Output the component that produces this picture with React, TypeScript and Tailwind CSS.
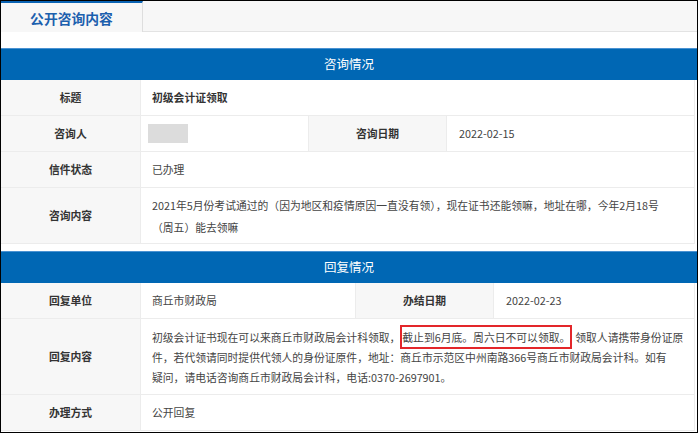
export default function App() {
  // 通用样式
  const label = "flex items-center justify-center bg-[#f7f7f7] font-bold text-[#333]";
  const row = "flex border-b border-[#ececec]";

  return (
    <div className="w-[698px] h-[433px] border border-black bg-white overflow-hidden font-['Noto_Sans_CJK_SC',sans-serif] text-[10.8px] text-[#444]">
      {/* 标签栏 */}
      <div className="flex h-[31px] bg-[#f7f7f7]">
        <div className="w-[142px] border-t-2 border-r border-[#0a63b3] border-r-[#dedede] flex items-center justify-center pt-[1px] text-[13.8px] font-bold text-[#1c60ae]">
          公开咨询内容
        </div>
        <div className="flex-1 border-b border-[#e3e3e3]" />
      </div>

      {/* 咨询情况 */}
      <div className="mt-[16px] h-[32px] bg-[#0067b4] border-t border-[#4a92d2] flex items-center justify-center text-white text-[12.5px]">
        咨询情况
      </div>
      <div className="mr-[2px] border-r border-[#ececec]">
        <div className={`${row} h-[36px]`}>
          <div className={`${label} w-[140px] border-r border-[#ececec]`}>标题</div>
          <div className="flex-1 flex items-center pl-[11px] font-bold text-[#333]">初级会计证领取</div>
        </div>
        <div className={`${row} h-[36px]`}>
          <div className={`${label} w-[140px] border-r border-[#ececec]`}>咨询人</div>
          <div className="w-[167px] flex items-center pl-[7px]">
            <div className="w-[40px] h-[19px] bg-[#dcdcdc]" />
          </div>
          <div className={`${label} w-[139px] border-x border-[#ececec]`}>咨询日期</div>
          <div className="flex-1 flex items-center pl-[12px]">2022-02-15</div>
        </div>
        <div className={`${row} h-[36px]`}>
          <div className={`${label} w-[140px] border-r border-[#ececec]`}>信件状态</div>
          <div className="flex-1 flex items-center pl-[11px]">已办理</div>
        </div>
        <div className={`${row} h-[56px]`}>
          <div className={`${label} w-[140px] border-r border-[#ececec]`}>咨询内容</div>
          <div className="flex-1 flex flex-col justify-center pl-[11px] leading-[22px] whitespace-nowrap">
            <span>2021年5月份考试通过的（因为地区和疫情原因一直没有领），现在证书还能领嘛，地址在哪，今年2月18号</span>
            <span>（周五）能去领嘛</span>
          </div>
        </div>
      </div>

      {/* 回复情况 */}
      <div className="mt-[7px] h-[32px] bg-[#0067b4] border-t border-[#4a92d2] flex items-center justify-center text-white text-[12.5px]">
        回复情况
      </div>
      <div className="mr-[2px] border-r border-[#ececec]">
        <div className={`${row} h-[36px]`}>
          <div className={`${label} w-[140px] border-r border-[#ececec]`}>回复单位</div>
          <div className="w-[214px] flex items-center pl-[11px]">商丘市财政局</div>
          <div className={`${label} w-[139px] border-x border-[#ececec]`}>办结日期</div>
          <div className="flex-1 flex items-center pl-[12px]">2022-02-23</div>
        </div>
        <div className={`${row} h-[76px]`}>
          <div className={`${label} w-[140px] border-r border-[#ececec]`}>回复内容</div>
          <div className="flex-1 flex flex-col justify-center pl-[11px] leading-[20px] whitespace-nowrap">
            <span>
              初级会计证书现在可以来商丘市财政局会计科领取，
              <span className="border-2 border-[#e3262a] py-[2px]">截止到6月底。周六日不可以领取。</span>
              <span className="ml-[3px]">领取人请携带身份证原</span>
            </span>
            <span>件，若代领请同时提供代领人的身份证原件，地址：商丘市示范区中州南路366号商丘市财政局会计科。如有</span>
            <span>疑问，请电话咨询商丘市财政局会计科，电话:0370-2697901。</span>
          </div>
        </div>
        <div className={`${row} h-[36px]`}>
          <div className={`${label} w-[140px] border-r border-[#ececec]`}>办理方式</div>
          <div className="flex-1 flex items-center pl-[11px]">公开回复</div>
        </div>
      </div>
    </div>
  );
}
